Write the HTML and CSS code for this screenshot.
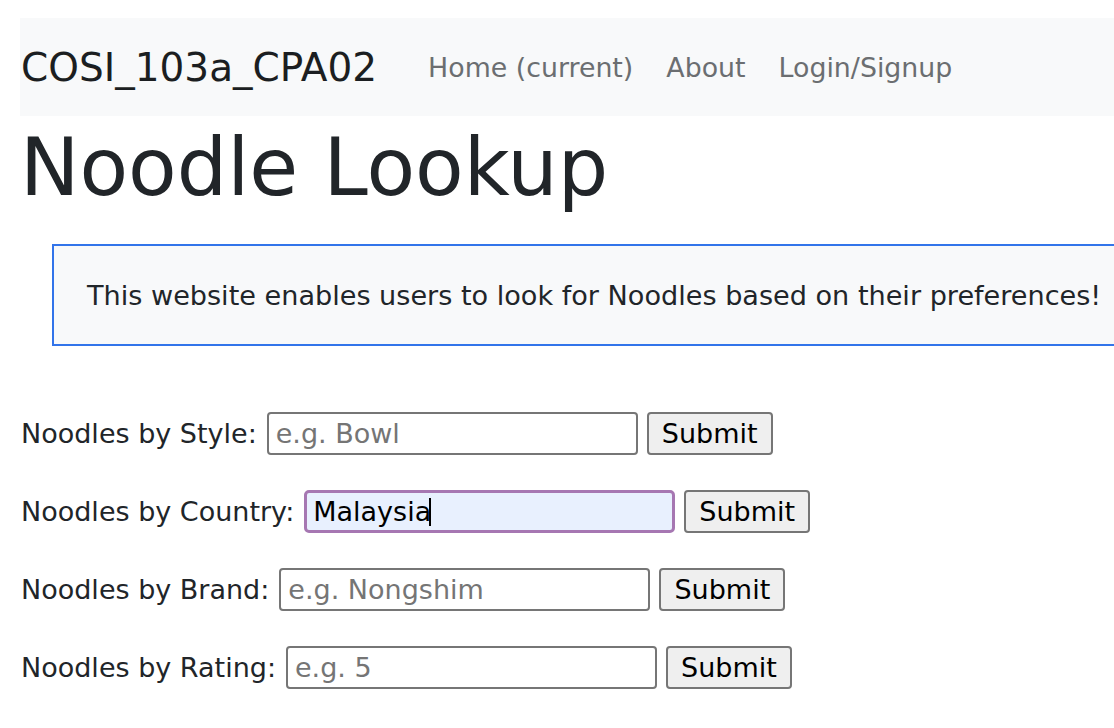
FILE: index.html
```html
<!DOCTYPE html>
<html lang="en">
<head>
<meta charset="utf-8">
<title>Noodle Lookup</title>
<link rel="stylesheet" href="styles.css">
</head>
<body>
<nav class="navbar">
  <a class="brand" href="#">COSI_103a_CPA02</a>
  <ul class="nav-links">
    <li><a href="#">Home (current)</a></li>
    <li><a href="#">About</a></li>
    <li><a href="#">Login/Signup</a></li>
  </ul>
</nav>
<h1 class="title">Noodle Lookup</h1>
<div class="intro">This website enables users to look for Noodles based on their preferences!</div>
<div class="forms">
  <form class="row">
    <label>Noodles by Style:</label>
    <input class="field" type="text" placeholder="e.g. Bowl">
    <button class="btn" type="button">Submit</button>
  </form>
  <form class="row">
    <label>Noodles by Country:</label>
    <span class="field-wrap">
      <input class="field focused" type="text" value="Malaysia">
      <span class="caret"></span>
    </span>
    <button class="btn" type="button">Submit</button>
  </form>
  <form class="row">
    <label>Noodles by Brand:</label>
    <input class="field" type="text" placeholder="e.g. Nongshim">
    <button class="btn" type="button">Submit</button>
  </form>
  <form class="row">
    <label>Noodles by Rating:</label>
    <input class="field" type="text" placeholder="e.g. 5">
    <button class="btn" type="button">Submit</button>
  </form>
</div>
</body>
</html>
```

FILE: styles.css
```css
html, body {
  margin: 0;
  overflow: hidden;
}
body {
  padding: 18px 0 0 20px;
  font-family: "DejaVu Sans", Verdana, sans-serif;
  font-size: 27px;
  color: #212529;
  background: #fff;
}
.navbar {
  display: flex;
  align-items: center;
  height: 98px;
  background: #f8f9fa;
  padding: 0 0 0 1px;
}
.brand {
  font-size: 39px;
  color: #1b1e21;
  text-decoration: none;
  margin-right: 51px;
}
.nav-links {
  list-style: none;
  display: flex;
  gap: 33px;
  margin: 0;
  padding: 0;
}
.nav-links a {
  color: #6b6e71;
  text-decoration: none;
  font-size: 26.8px;
}
.title {
  font-size: 79.5px;
  font-weight: 400;
  line-height: 1.2;
  margin: 4px 0 0 0;
  color: #212529;
}
.intro {
  margin: 29px 0 0 32px;
  width: 1100px;
  height: 98px;
  box-sizing: content-box;
  border: 2px solid #3274ea;
  background: #f8f9fa;
  padding: 0 0 0 33px;
  display: flex;
  align-items: center;
  font-size: 27.1px;
  color: #212529;
}
.forms {
  margin-top: 66px;
  display: flex;
  flex-direction: column;
  gap: 35px;
}
.row {
  display: flex;
  align-items: center;
  margin: 0;
  padding-left: 1px;
}
.row label {
  margin-right: 10px;
}
.field-wrap {
  position: relative;
  display: inline-flex;
}
.field {
  width: 371px;
  height: 43px;
  box-sizing: border-box;
  border: 2px solid #767676;
  border-radius: 4px;
  padding: 0 7px;
  font-family: "DejaVu Sans", Verdana, sans-serif;
  font-size: 27px;
  color: #000;
  background: #fff;
  margin: 0;
  outline: none;
}
.field::placeholder {
  color: #757575;
}
.field.focused {
  border: 3px solid #a677b2;
  background: #e8f0fe;
  border-radius: 5px;
  padding: 0 6px;
}
.caret {
  position: absolute;
  left: 125px;
  top: 8px;
  width: 2px;
  height: 28px;
  background: #000;
}
.btn {
  margin-left: 9px;
  width: 126px;
  height: 43px;
  box-sizing: border-box;
  border: 2px solid #767676;
  border-radius: 4px;
  background: #efefef;
  font-family: "DejaVu Sans", Verdana, sans-serif;
  font-size: 27px;
  color: #000;
  padding: 0;
}
```
